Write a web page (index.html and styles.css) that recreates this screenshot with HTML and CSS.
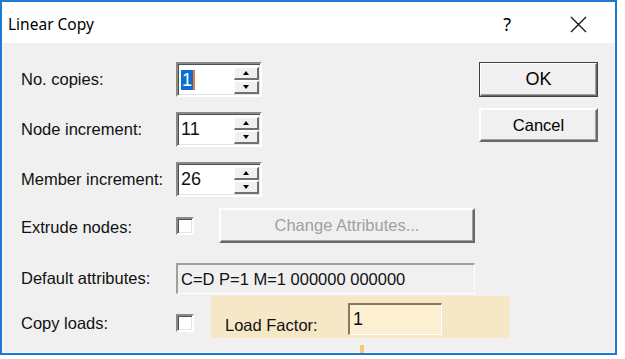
FILE: index.html
```html
<!DOCTYPE html>
<html lang="en">

<head>
    <meta charset="UTF-8">
    <meta name="viewport" content="width=device-width, initial-scale=1.0">
    <title>Linear Copy</title>
    <link rel="stylesheet" href="styles.css">
</head>

<body>
    <div class="window">
        <div class="titlebar">
            <span class="title">Linear Copy</span>
            <span class="help">?</span>
            <svg class="close" width="17" height="17" viewBox="0 0 17 17">
                <path d="M1 1 L16 16 M16 1 L1 16" stroke="#1a1a1a" stroke-width="1.4" fill="none" />
            </svg>
        </div>
        <div class="dialog">
            <div class="form">
                <div class="row">
                    <span class="label">No. copies:</span>
                    <div class="spin sunken">
                        <span class="spin-value"><span class="selected">1</span><span class="caret"></span></span>
                        <div class="spin-btns">
                            <span class="spin-btn"><span class="arrow-up"></span></span>
                            <span class="spin-btn"><span class="arrow-down"></span></span>
                        </div>
                    </div>
                </div>
                <div class="row">
                    <span class="label">Node increment:</span>
                    <div class="spin sunken">
                        <span class="spin-value">11</span>
                        <div class="spin-btns">
                            <span class="spin-btn"><span class="arrow-up"></span></span>
                            <span class="spin-btn"><span class="arrow-down"></span></span>
                        </div>
                    </div>
                </div>
                <div class="row">
                    <span class="label">Member increment:</span>
                    <div class="spin sunken">
                        <span class="spin-value">26</span>
                        <div class="spin-btns">
                            <span class="spin-btn"><span class="arrow-up"></span></span>
                            <span class="spin-btn"><span class="arrow-down"></span></span>
                        </div>
                    </div>
                </div>
                <div class="row row-extrude">
                    <span class="label">Extrude nodes:</span>
                    <span class="check sunken"></span>
                    <button class="btn btn-disabled">Change Attributes...</button>
                </div>
                <div class="row row-attrs">
                    <span class="label">Default attributes:</span>
                    <div class="readonly">C=D P=1 M=1 000000 000000</div>
                </div>
                <div class="row row-loads">
                    <span class="label">Copy loads:</span>
                    <span class="check sunken"></span>
                    <div class="highlight">
                        <span class="hl-label">Load Factor:</span>
                        <div class="hl-input">1</div>
                    </div>
                </div>
            </div>
            <div class="actions">
                <button class="btn btn-default">OK</button>
                <button class="btn">Cancel</button>
            </div>
        </div>
        <span class="marker"></span>
    </div>
</body>

</html>
```

FILE: styles.css
```css
body {
    margin: 0;
    background-color: #fff;
    font-family: "Liberation Sans", Arial, sans-serif;
    overflow: hidden;
}

.window {
    position: relative;
    width: 617px;
    height: 355px;
    box-sizing: border-box;
    border: 2px solid #1b7bd3;
    display: flex;
    flex-direction: column;
}

/* barra de titulo */
.titlebar {
    height: 41px;
    box-sizing: border-box;
    padding-top: 3px;
    flex-shrink: 0;
    background-color: #fff;
    display: flex;
    align-items: center;
    font-family: "Noto Sans", sans-serif;
    color: #000;
}

.title {
    font-size: 15.5px;
    margin-left: 6px;
    flex-grow: 1;
}

.help {
    font-size: 18px;
    margin-right: 59px;
}

.close {
    margin-right: 28px;
}

.dialog {
    flex-grow: 1;
    background-color: #f0f0f0;
    border: 1px solid #fafafa;
    border-top: none;
    display: flex;
    padding: 19px 0 0 18px;
}

.form {
    width: 458px;
    display: flex;
    flex-direction: column;
}

.row {
    display: flex;
    align-items: center;
    height: 35px;
    margin-bottom: 15px;
    font-size: 16.5px;
    color: #111;
}

.label {
    width: 155px;
    flex-shrink: 0;
}

/* bordas 3D afundadas */
.sunken {
    box-sizing: border-box;
    border-top: 2px solid #8a8a8a;
    border-left: 2px solid #8a8a8a;
    border-right: 2px solid #fff;
    border-bottom: 2px solid #fff;
    box-shadow: inset 1px 1px 0 #505050, inset -1px -1px 0 #e3e3e3;
}

.spin {
    width: 86px;
    height: 35px;
    display: flex;
    background-color: #fff;
}

.spin-value {
    flex-grow: 1;
    display: flex;
    align-items: center;
    padding-left: 3px;
    font-size: 18px;
}

.selected {
    background-color: #0a6fd0;
    color: #fff;
    line-height: 20px;
    padding: 0 1px;
}

.caret {
    width: 2px;
    height: 20px;
    background-color: #f07d20;
}

.spin-btns {
    width: 25px;
    display: flex;
    flex-direction: column;
    padding: 3px 1px 1px 0;
    gap: 1px;
}

.spin-btn {
    flex-grow: 1;
    background-color: #f0f0f0;
    border-right: 2px solid #707070;
    border-bottom: 2px solid #707070;
    border-top: 1px solid #fff;
    border-left: 1px solid #fff;
    display: flex;
    align-items: center;
    justify-content: center;
}

.arrow-up {
    border-left: 3px solid transparent;
    border-right: 3px solid transparent;
    border-bottom: 4px solid #000;
}

.arrow-down {
    border-left: 3px solid transparent;
    border-right: 3px solid transparent;
    border-top: 4px solid #000;
}

.row-extrude {
    margin-top: -4px;
    margin-bottom: 20px;
}

.row-extrude .label {
    margin-top: 4px;
}

.check {
    width: 18px;
    height: 18px;
    background-color: #fff;
    flex-shrink: 0;
}

/* botoes */
.btn {
    box-sizing: border-box;
    font-family: "Liberation Sans", Arial, sans-serif;
    font-size: 16.5px;
    color: #000;
    background-color: #f0f0f0;
    border-top: 2px solid #fff;
    border-left: 2px solid #fff;
    border-right: 2px solid #696969;
    border-bottom: 2px solid #696969;
    box-shadow: inset -1px -1px 0 #a0a0a0;
    padding: 0;
    width: 119px;
    height: 34px;
}

.btn-disabled {
    width: 256px;
    height: 35px;
    margin-left: 25px;
    color: #a0a0a0;
}

.btn-default {
    outline: 1px solid #404040;
    outline-offset: -1px;
    height: 35px;
    font-size: 18px;
}

.actions {
    display: flex;
    flex-direction: column;
    gap: 11px;
}

.row-attrs {
    height: 31px;
    margin-bottom: 2px;
}

.readonly {
    box-sizing: border-box;
    width: 299px;
    height: 31px;
    border-top: 2px solid #a0a0a0;
    border-left: 2px solid #a0a0a0;
    border-right: 1px solid #fff;
    border-bottom: 1px solid #fff;
    padding-left: 3px;
    display: flex;
    align-items: center;
}

.row-loads {
    height: 42px;
    margin-bottom: 0;
}

.row-loads .label,
.row-loads .check {
    margin-top: 12px;
}

.highlight {
    width: 299px;
    height: 42px;
    margin-left: 17px;
    background-color: #f6e7c6;
    display: flex;
    align-items: center;
    flex-shrink: 0;
}

.hl-label {
    width: 137px;
    padding-left: 14px;
    box-sizing: border-box;
    margin-top: 16px;
}

.hl-input {
    box-sizing: border-box;
    width: 94px;
    height: 32px;
    background-color: #fdf0d2;
    border-top: 2px solid #8a7a5a;
    border-left: 2px solid #8a7a5a;
    border-right: 1px solid #fff;
    border-bottom: 1px solid #fff;
    padding-left: 3px;
    font-size: 18px;
    display: flex;
    align-items: center;
    margin-top: 3px;
}

/* pequena marca laranja sobre a borda */
.marker {
    position: absolute;
    left: 358px;
    bottom: 0;
    width: 4px;
    height: 8px;
    background-color: #f5c880;
}
```
